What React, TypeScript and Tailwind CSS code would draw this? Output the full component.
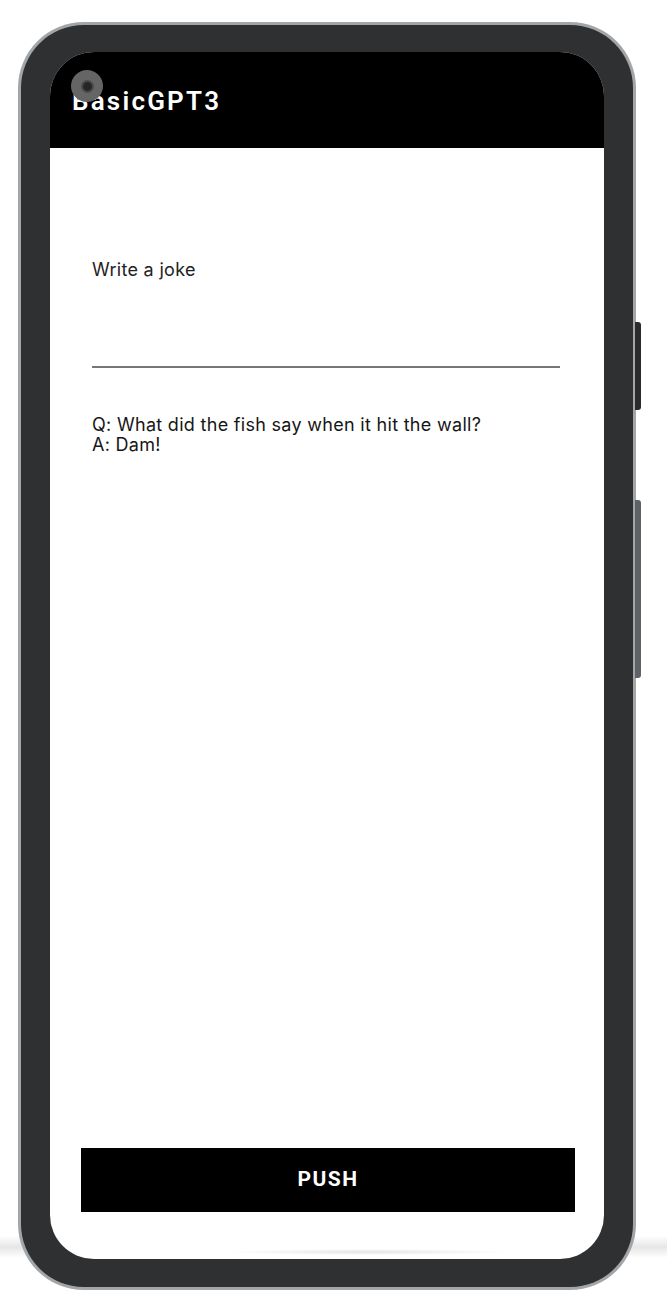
import React from "react";

export default function App() {
  return (
    <div className="relative min-h-[1301px] w-[667px] bg-white font-['Inter',sans-serif]">
      {/* floor shadow behind the phone */}
      <div className="absolute left-0 right-0 top-[1236px] h-[22px] bg-[linear-gradient(to_bottom,#ffffff,#e6e6e6_50%,#ffffff)]" />

      <div className="relative pl-[18px] pt-[22px]">
        <div className="relative w-[618px]">
          {/* side buttons */}
          <div className="absolute right-[-5px] top-[300px] h-[88px] w-[6px] rounded-r-[3px] bg-[#2a2b2c]" />
          <div className="absolute right-[-5px] top-[478px] h-[178px] w-[6px] rounded-r-[3px] bg-[#5d6268]" />

          <div className="rounded-[66px] bg-[#a3a6a9] p-[3px]">
            <div className="rounded-[63px] bg-[#2f3031] px-[29px] pb-[28px] pt-[27px]">
              <div className="relative flex h-[1207px] flex-col overflow-hidden rounded-[44px] bg-white">
                <header className="flex h-[96px] items-center bg-black pl-[22px] pt-[2px]">
                  <h1 className="font-['Roboto',sans-serif] text-[26px] font-semibold tracking-[2.2px] text-white">
                    BasicGPT3
                  </h1>
                </header>

                {/* camera punch hole */}
                <div className="absolute left-[21px] top-[18px] flex h-[32px] w-[32px] items-center justify-center rounded-full bg-[#656565]">
                  <div className="h-[13px] w-[13px] rounded-full border-2 border-[#4a4a4a] bg-[#262626]" />
                </div>

                <main className="flex flex-1 flex-col px-[42px]">
                  <p className="mt-[112px] text-[18px] leading-[20px] tracking-[0.3px] text-[#222]">
                    Write a joke
                  </p>
                  <div className="mr-[2px] mt-[86px] h-[2px] bg-[#767676]" />
                  <p className="mt-[47px] text-[18px] leading-[20px] tracking-[0.3px] text-[#161616]">
                    Q: What did the fish say when it hit the wall?
                    <br />
                    A: Dam!
                  </p>
                </main>

                <div className="pb-[47px] pl-[31px] pr-[29px]">
                  <button className="flex h-[64px] w-full items-center justify-center bg-black font-['Roboto',sans-serif] text-[21px] font-bold tracking-[1.5px] text-white">
                    PUSH
                  </button>
                </div>

                <div className="absolute bottom-[4px] left-[175px] h-[6px] w-[285px] bg-[radial-gradient(ellipse_at_center,#e4e4e4,#ffffff_70%)]" />
              </div>
            </div>
          </div>
        </div>
      </div>
    </div>
  );
}
